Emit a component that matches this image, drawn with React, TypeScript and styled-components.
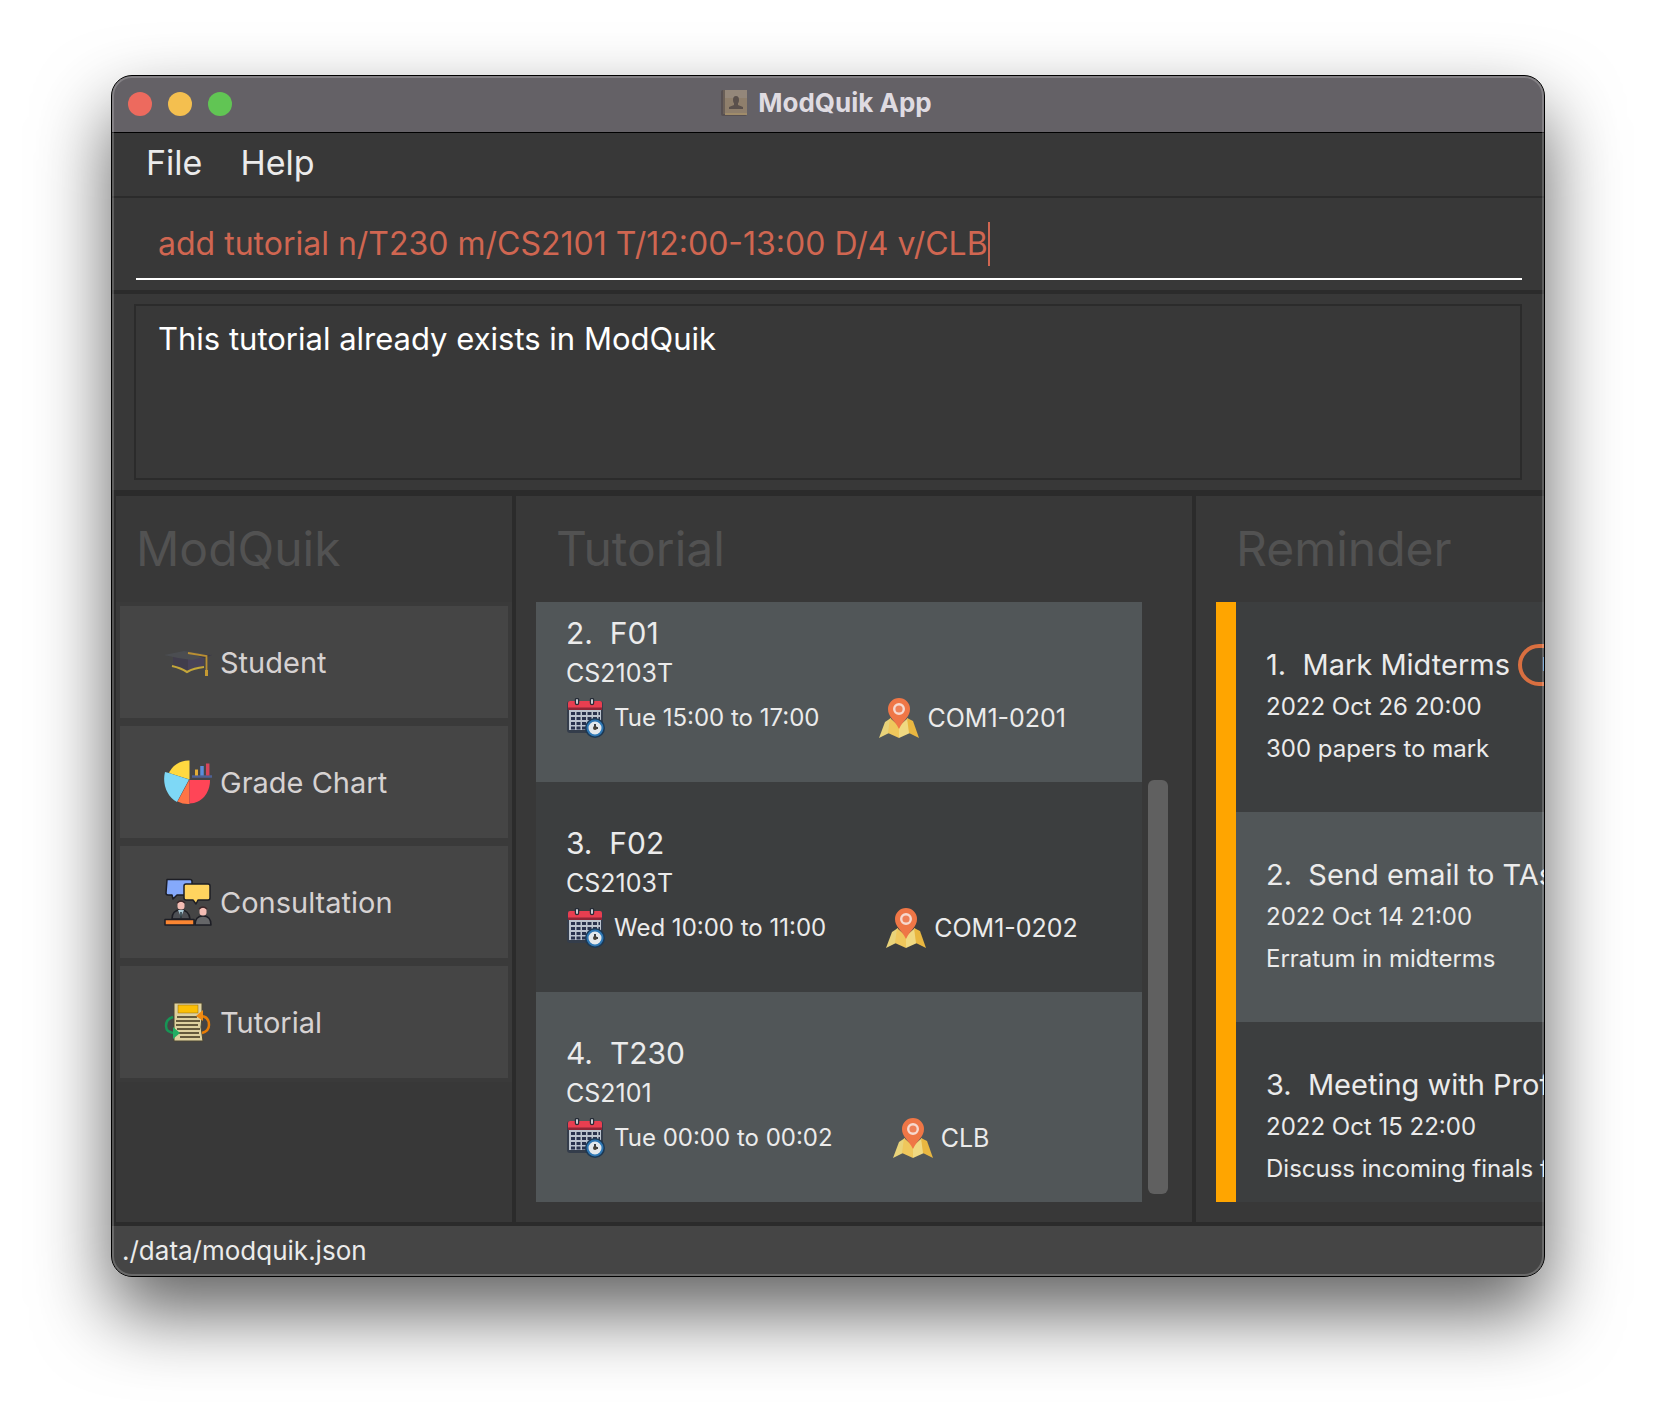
import React from "react";
import styled, { createGlobalStyle } from "styled-components";

const color = {
  base: "#383838",
  line: "#2b2b2b",
  raised: "#454545",
  heading: "#525252",
  text: "#ebebeb",
  label: "#d6d2d2",
  error: "#d06651",
  rowDark: "#3c3e3f",
  rowLight: "#515658",
  accent: "#ffa500",
  tag: "#d96f40",
};

const GlobalStyle = createGlobalStyle`
  *, *::before, *::after { box-sizing: border-box; }
  body {
    margin: 0;
    background: #ffffff;
    font-family: Inter, "Liberation Sans", sans-serif;
    color: ${color.text};
  }
  button, input, textarea { font-family: inherit; color: inherit; }
`;

const Desktop = styled.div`
  display: flex;
  min-height: 100vh;
  padding: 75px 111px 147px;
  overflow: hidden;
`;

const Window = styled.main`
  position: relative;
  flex: 1;
  min-width: 0;
  display: flex;
  flex-direction: column;
  border: 1px solid #000000;
  border-radius: 21px;
  overflow: hidden;
  background: ${color.base};
`;

const Shadow = styled.div`
  flex: 1;
  min-width: 0;
  display: flex;
  border-radius: 21px;
  box-shadow: 0 36px 74px rgba(0, 0, 0, 0.62);
`;

const Rim = styled.div`
  position: absolute;
  inset: 0;
  border: 2px solid rgba(255, 255, 255, 0.2);
  border-radius: 20px;
  pointer-events: none;
`;

const TitleBar = styled.header`
  display: grid;
  grid-template-columns: 1fr auto 1fr;
  align-items: center;
  height: 57px;
  padding: 0 16px;
  background: #646166;
  border-bottom: 1px solid #000000;
`;

const Lights = styled.div`
  display: flex;
  gap: 16px;
`;

const Light = styled.button<{ $fill: string }>`
  width: 24px;
  height: 24px;
  padding: 0;
  border: 0;
  border-radius: 50%;
  background: ${(p) => p.$fill};
`;

const WindowTitle = styled.h1`
  display: flex;
  align-items: center;
  gap: 10px;
  margin: 0;
  padding: 0 4px 2px 0;
  font-size: 26px;
  line-height: 32px;
  font-weight: 700;
  color: #dfdbe1;
`;

const MenuBar = styled.nav`
  display: flex;
  gap: 6px;
  height: 65px;
  padding: 0 18px;
  border-bottom: 2px solid ${color.line};
`;

const MenuItem = styled.button`
  padding: 0 16px 4px;
  border: 0;
  background: none;
  font-size: 34px;
`;

const CommandBar = styled.form`
  padding: 12px 22px 10px 24px;
  border-bottom: 4px solid ${color.line};
`;

const CommandField = styled.div`
  display: flex;
  align-items: center;
  height: 70px;
  padding: 0 22px;
  border-bottom: 2px solid #ffffff;
`;

const CommandInput = styled.input`
  field-sizing: content;
  max-width: 100%;
  height: 44px;
  padding: 0 0 2px;
  border: 0;
  outline: none;
  background: none;
  font-size: 32px;
  color: ${color.error};
  caret-color: transparent;
`;

const Caret = styled.span`
  flex: none;
  width: 2px;
  height: 44px;
  background: ${color.error};
`;

const ResultArea = styled.section`
  display: flex;
  padding: 10px 22px;
  border-bottom: 6px solid ${color.line};
`;

const ResultText = styled.textarea`
  flex: 1;
  height: 176px;
  padding: 10px 22px;
  border: 2px solid ${color.line};
  outline: none;
  resize: none;
  background: none;
  font-size: 31px;
  line-height: 46px;
  color: #ffffff;
`;

const Panels = styled.div`
  flex: 1;
  display: grid;
  grid-template-columns: 400px minmax(0, 680px) minmax(0, 1fr);
  border-bottom: 4px solid ${color.line};
`;

const Panel = styled.section`
  display: flex;
  flex-direction: column;
  min-width: 0;
  border-left: 4px solid ${color.line};
`;

const PanelTitle = styled.h2<{ $inset: number }>`
  margin: 0;
  padding: 0 ${(p) => p.$inset}px;
  font-size: 48px;
  line-height: 106px;
  font-weight: 400;
  color: ${color.heading};
`;

const SideNav = styled.nav`
  display: flex;
  flex-direction: column;
  gap: 8px;
  padding: 4px;
  background: #3a3a3a;
`;

const SideButton = styled.button`
  display: flex;
  align-items: center;
  gap: 8px;
  height: 112px;
  padding: 0 44px;
  border: 0;
  background: ${color.raised};
  font-size: 29px;
  color: ${color.label};
`;

const PanelBody = styled.div<{ $right: number }>`
  flex: 1;
  display: flex;
  gap: 6px;
  min-height: 0;
  padding: 0 ${(p) => p.$right}px 20px 20px;
`;

const List = styled.ul<{ $end?: boolean; $accent?: boolean }>`
  flex: 1;
  display: flex;
  flex-direction: column;
  justify-content: ${(p) => (p.$end ? "flex-end" : "flex-start")};
  min-width: 0;
  height: 600px;
  margin: 0;
  padding: 0;
  list-style: none;
  overflow: hidden;
  white-space: nowrap;
  border-left: ${(p) => (p.$accent ? `20px solid ${color.accent}` : "0")};
`;

const Row = styled.li<{ $light: boolean }>`
  flex: none;
  height: 210px;
  padding: 40px 30px;
  background: ${(p) => (p.$light ? color.rowLight : color.rowDark)};
`;

const ReminderRow = styled(Row)`
  padding: 42px 30px;
`;

const RowTitle = styled.h3<{ $size: number }>`
  display: flex;
  align-items: center;
  gap: 8px;
  margin: 0;
  font-size: ${(p) => p.$size}px;
  line-height: 42px;
  font-weight: 400;
  white-space: pre;
`;

const ModuleCode = styled.p`
  margin: 0;
  font-size: 25px;
  line-height: 38px;
`;

const ReminderText = styled.p`
  margin: 0;
  font-size: 24px;
  line-height: 42px;
`;

const Details = styled.div`
  display: flex;
  gap: 60px;
  margin-top: 6px;
`;

const Detail = styled.span<{ $size: number }>`
  display: flex;
  align-items: center;
  gap: 8px;
  font-size: ${(p) => p.$size}px;
  line-height: 40px;
`;

const Tag = styled.span`
  padding: 0 20px;
  border: 4px solid ${color.tag};
  border-radius: 21px;
  font-size: 18px;
  line-height: 34px;
`;

const ScrollTrack = styled.div`
  flex: none;
  display: flex;
  flex-direction: column;
  justify-content: flex-end;
  width: 20px;
  padding-bottom: 8px;
`;

const ScrollThumb = styled.div`
  height: 70%;
  border-radius: 6px;
  background: #606060;
`;

const StatusBar = styled.footer`
  padding: 0 10px;
  background: ${color.raised};
  font-size: 26px;
  line-height: 50px;
`;

const BookIcon = () => (
  <svg width="28" height="28" viewBox="0 0 28 28" aria-hidden="true">
    <rect x="1" y="1" width="26" height="26" rx="2" fill="#575052" />
    <rect x="3" y="1" width="24" height="24" fill="#8f7f6c" />
    <rect x="3" y="1" width="24" height="8" fill="#94877a" />
    <rect x="3" y="1" width="2" height="24" fill="#6b6058" />
    <rect x="5" y="24" width="22" height="2" fill="#a08c6a" />
    <ellipse cx="16" cy="11" rx="3" ry="4" fill="#5a504c" />
    <path d="M14 13h4v3l5 2v2H9v-2l5-2z" fill="#5a504c" />
  </svg>
);

const CapIcon = () => (
  <svg width="48" height="48" viewBox="0 0 48 48" aria-hidden="true">
    <path d="M9 18v11q8 1 14 5 8-5 17-6V18z" fill="#413d4c" />
    <path d="M24 20h16v8q-9 1-16 6z" fill="#484258" />
    <path d="M0 17 20 13l28 4-20 5-14-2z" fill="#4b4d51" />
    <path d="m24 15 24 2-7 3z" fill="#3b3844" />
    <path d="M8 28q9 2 15 6 7-4 17-5" fill="none" stroke="#c4a63a" strokeWidth="2.200" />
    <path d="m24 15 18.500 3v17" fill="none" stroke="#b98f33" strokeWidth="1.800" />
    <path d="M42.500 32v6" stroke="#c69a32" strokeWidth="3" />
  </svg>
);

const ChartIcon = () => (
  <svg width="48" height="48" viewBox="0 0 48 48" aria-hidden="true">
    <path d="M25.500 21.500V2.500C16 2 8 8 5 15z" fill="#ffd940" />
    <path d="M25 21.500 5 15l-4-1C-2 26 3 39 13 44z" fill="#7ed8f6" />
    <path d="m25.500 21.500-12 22q6 3 12 2.500z" fill="#ff7446" />
    <path d="M25.500 22H46c0 13-8 23-20.500 23.500z" fill="#ff4557" />
    <path d="M28 18.500h20" stroke="#4e6194" strokeWidth="2.500" />
    <path d="M32.500 11.500v6" stroke="#e2ad37" strokeWidth="3" />
    <path d="M38 8v9.500" stroke="#5c8fdc" strokeWidth="3.500" />
    <path d="M43.700 5.500v12" stroke="#d6455b" strokeWidth="3.500" />
  </svg>
);

const ConsultIcon = () => (
  <svg width="48" height="48" viewBox="0 0 48 48" aria-hidden="true">
    <g stroke="#1d1e25" strokeWidth="1.500" strokeLinejoin="round">
      <path d="M3 1.500h23q2 0 2 2V17H13l-4 4-1-4H4q-2 0-2-2z" fill="#85a9fb" />
      <path d="M22 6h22q2 0 2 2v12q0 2-2 2H34l-2 4-3-4h-7q-2 0-2-2V8q0-2 2-2z" fill="#ffd45f" />
      <path d="M8 41q0-9 8.500-9t9.500 9z" fill="#4d4f54" />
      <path d="M31 47q0-9 8-9t8 9z" fill="#656668" />
      <path d="M1 41.500h29V47H1z" fill="#fb8632" />
    </g>
    <path d="m14 32 3 7 3-7z" fill="#a9c8d5" />
    <path d="M17 34v6" stroke="#26343b" strokeWidth="1.500" />
    <rect x="13.500" y="23.500" width="7" height="8" rx="3" fill="#f4bdb4" />
    <rect x="35.500" y="29.500" width="7" height="8" rx="3" fill="#f4bdb4" />
    <path d="M13 25q4-4 8 0M35 31q4-4 8 0" fill="none" stroke="#3b2729" strokeWidth="1.500" />
  </svg>
);

const LessonIcon = () => (
  <svg width="48" height="48" viewBox="0 0 48 48" aria-hidden="true">
    <path d="M10 5h28v14l-1 10 2 14H10V29z" fill="#ded19f" stroke="#4c4733" />
    <rect x="14" y="7" width="20" height="8" fill="#fbbf05" stroke="#8a6a17" strokeWidth="0.500" />
    <path d="M13 19h20M12 23h24M12 27h22M13 31h23M12 35h23M16 39h20" stroke="#64593c" strokeWidth="1.800" />
    <path d="M9 19Q2 21 2 28q0 7 10 7" fill="none" stroke="#179455" strokeWidth="2.500" />
    <path d="m9 29 7 6-7 6z" fill="#22ad63" />
    <path d="M36 18q9 0 9 9 0 6-7 8" fill="none" stroke="#e87d05" strokeWidth="2.500" />
    <path d="m39 12-7 6 7 5z" fill="#f08b13" />
  </svg>
);

const CalendarIcon = () => (
  <svg width="40" height="40" viewBox="0 0 40 40" aria-hidden="true">
    <rect x="1" y="3" width="36" height="32" rx="3" fill="#343d4b" />
    <rect x="3" y="12" width="32" height="20" fill="#bcc4cf" />
    <path d="M2 12V5q0-2 2-2h30q2 0 2 2v7z" fill="#e83e50" />
    <path d="M2 9.500h34V12H2z" fill="#8d2637" />
    <path d="M5 15.500h29M5 20.500h29M5 25.500h29M5 30h16" stroke="#29324d" strokeWidth="3" strokeDasharray="4 1.500" />
    <path d="M11 2v3M26 2v3" stroke="#242b36" strokeWidth="4.500" strokeLinecap="round" />
    <path d="M11 2v3M26 2v3" stroke="#c9ced5" strokeWidth="2" strokeLinecap="round" />
    <circle cx="29" cy="30" r="10" fill="#1c3854" />
    <circle cx="29" cy="30" r="7.500" fill="#e5e9ec" stroke="#2f78b4" strokeWidth="2" />
    <path d="M29 26v4h3" fill="none" stroke="#3e4146" strokeWidth="2" />
    <circle cx="29" cy="30" r="2" fill="#4a4338" />
  </svg>
);

const PlaceIcon = () => (
  <svg width="40" height="40" viewBox="0 0 40 40" aria-hidden="true">
    <path d="m6 24 6-4-2 15L0 40z" fill="#e9d37a" />
    <path d="m11 20 9 8v12l-11-5z" fill="#efc75c" />
    <path d="m20 28 9-8 2 15-11 5z" fill="#f0d982" />
    <path d="m28 20 6 3 6 17-10-5z" fill="#e9b741" />
    <path d="M20 0a11 11 0 0 0-11 11c0 8 6 10 11 20 5-10 11-12 11-20A11 11 0 0 0 20 0z" fill="#ef7646" />
    <circle cx="20" cy="11" r="4.800" fill="#ee8058" stroke="#f6d9cf" strokeWidth="2.400" />
  </svg>
);

const sections = [
  { label: "Student", Icon: CapIcon },
  { label: "Grade Chart", Icon: ChartIcon },
  { label: "Consultation", Icon: ConsultIcon },
  { label: "Tutorial", Icon: LessonIcon },
];

const tutorials = [
  { id: 2, name: "F01", module: "CS2103T", time: "Tue 15:00 to 17:00", venue: "COM1-0201" },
  { id: 3, name: "F02", module: "CS2103T", time: "Wed 10:00 to 11:00", venue: "COM1-0202" },
  { id: 4, name: "T230", module: "CS2101", time: "Tue 00:00 to 00:02", venue: "CLB" },
];

const reminders = [
  { id: 1, name: "Mark Midterms", due: "2022 Oct 26 20:00", note: "300 papers to mark", tag: "HIGH" },
  { id: 2, name: "Send email to TAs", due: "2022 Oct 14 21:00", note: "Erratum in midterms" },
  { id: 3, name: "Meeting with Prof", due: "2022 Oct 15 22:00", note: "Discuss incoming finals for" },
];

export default function App() {
  const [command, setCommand] = React.useState(
    "add tutorial n/T230 m/CS2101 T/12:00-13:00 D/4 v/CLB"
  );

  return (
    <>
      <GlobalStyle />
      <Desktop>
        <Shadow>
          <Window>
            <TitleBar>
              <Lights>
                <Light $fill="#ed6a5e" aria-label="Close" />
                <Light $fill="#f4bf4f" aria-label="Minimize" />
                <Light $fill="#61c554" aria-label="Zoom" />
              </Lights>
              <WindowTitle>
                <BookIcon />
                ModQuik App
              </WindowTitle>
            </TitleBar>

            <MenuBar>
              <MenuItem>File</MenuItem>
              <MenuItem>Help</MenuItem>
            </MenuBar>

            <CommandBar onSubmit={(e) => e.preventDefault()}>
              <CommandField>
                <CommandInput
                  aria-label="Command"
                  spellCheck={false}
                  value={command}
                  onChange={(e) => setCommand(e.target.value)}
                />
                <Caret />
              </CommandField>
            </CommandBar>

            <ResultArea>
              <ResultText aria-label="Result" readOnly value="This tutorial already exists in ModQuik" />
            </ResultArea>

            <Panels>
              <Panel>
                <PanelTitle $inset={20}>ModQuik</PanelTitle>
                <SideNav>
                  {sections.map(({ label, Icon }) => (
                    <SideButton key={label}>
                      <Icon />
                      {label}
                    </SideButton>
                  ))}
                </SideNav>
              </Panel>

              <Panel>
                <PanelTitle $inset={40}>Tutorial</PanelTitle>
                <PanelBody $right={24}>
                  <List $end>
                    {tutorials.map((t) => (
                      <Row key={t.id} $light={t.id % 2 === 0}>
                        <RowTitle $size={30}>{`${t.id}.  ${t.name}`}</RowTitle>
                        <ModuleCode>{t.module}</ModuleCode>
                        <Details>
                          <Detail $size={24}>
                            <CalendarIcon />
                            {t.time}
                          </Detail>
                          <Detail $size={25}>
                            <PlaceIcon />
                            {t.venue}
                          </Detail>
                        </Details>
                      </Row>
                    ))}
                  </List>
                  <ScrollTrack>
                    <ScrollThumb />
                  </ScrollTrack>
                </PanelBody>
              </Panel>

              <Panel>
                <PanelTitle $inset={40}>Reminder</PanelTitle>
                <PanelBody $right={0}>
                  <List $accent>
                    {reminders.map((r) => (
                      <ReminderRow key={r.id} $light={r.id % 2 === 0}>
                        <RowTitle $size={29}>
                          {`${r.id}.  ${r.name}`}
                          {r.tag && <Tag>{r.tag}</Tag>}
                        </RowTitle>
                        <ReminderText>{r.due}</ReminderText>
                        <ReminderText>{r.note}</ReminderText>
                      </ReminderRow>
                    ))}
                  </List>
                </PanelBody>
              </Panel>
            </Panels>

            <StatusBar>./data/modquik.json</StatusBar>
            <Rim />
          </Window>
        </Shadow>
      </Desktop>
    </>
  );
}
